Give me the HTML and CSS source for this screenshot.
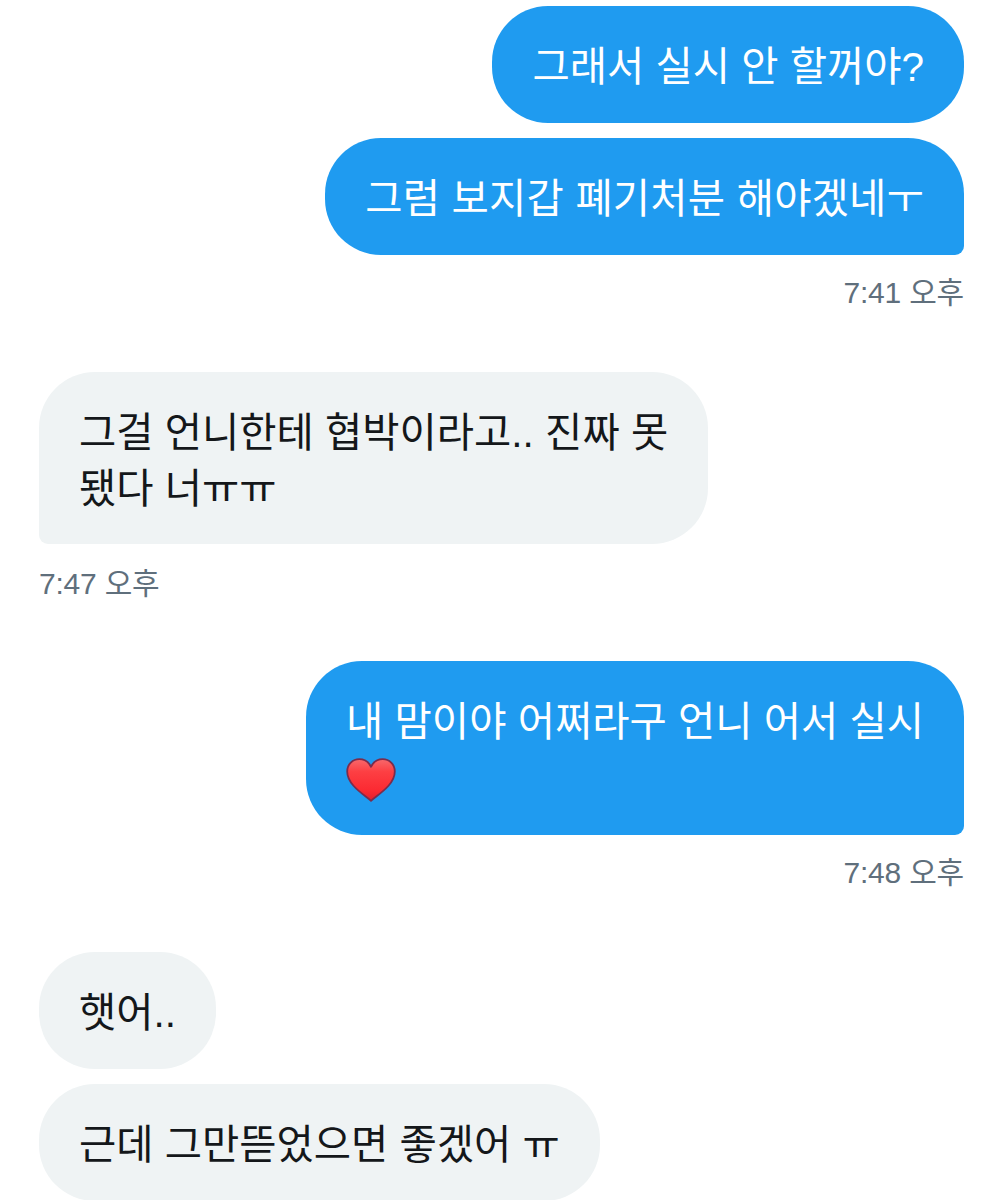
FILE: index.html
```html
<!DOCTYPE html>
<html lang="ko">
<head>
    <meta charset="UTF-8">
    <meta name="viewport" content="width=device-width, initial-scale=1.0">
    <title>Messages</title>
    <link rel="stylesheet" href="styles.css">
</head>
<body>
    <main class="thread">
        <section class="group sent">
            <p class="bubble">그래서 실시 안 할꺼야?</p>
            <p class="bubble last wide">그럼 보지갑 폐기처분 해야겠네ㅜ</p>
            <time class="stamp">7:41 오후</time>
        </section>

        <section class="group received">
            <p class="bubble last">그걸 언니한테 협박이라고.. 진짜 못<br>됐다 너ㅠㅠ</p>
            <time class="stamp">7:47 오후</time>
        </section>

        <section class="group sent">
            <p class="bubble last">내 맘이야 어쩌라구 언니 어서 실시
                <svg class="heart" viewBox="0 0 50 44" role="img" aria-label="heart">
                    <defs>
                        <linearGradient id="heartFill" x1="0" y1="0" x2="0" y2="1">
                            <stop offset="0" stop-color="#f7696c"/>
                            <stop offset="0.3" stop-color="#fd3f43"/>
                            <stop offset="0.75" stop-color="#fb2a32"/>
                            <stop offset="1" stop-color="#e01f2d"/>
                        </linearGradient>
                    </defs>
                    <path d="M25 42.800 C18 36.500 1.200 27 1.200 13.500 C1.200 6 6.800 1.200 13.200 1.200 C18.500 1.200 22.800 4 25 8.800 C27.200 4 31.500 1.200 36.800 1.200 C43.200 1.200 48.800 6 48.800 13.500 C48.800 27 32 36.500 25 42.800 Z" fill="url(#heartFill)" stroke="#7b2c4c" stroke-width="1.800" stroke-linejoin="round"/>
                </svg>
            </p>
            <time class="stamp">7:48 오후</time>
        </section>

        <section class="group received">
            <p class="bubble">햇어..</p>
            <p class="bubble">근데 그만뜯었으면 좋겠어 ㅠ</p>
        </section>
    </main>
</body>
</html>
```

FILE: styles.css
```css
html, body {
    margin: 0;
    padding: 0;
    height: 1200px;
    overflow: hidden;
    background-color: #fff;
}

body {
    font-family: "Liberation Sans", "Noto Sans CJK KR", sans-serif;
}

.thread {
    display: flex;
    flex-direction: column;
    gap: 59px;
    padding: 6px 39px 0 39px;
}

.group {
    display: flex;
    flex-direction: column;
    gap: 15px;
}

.sent {
    align-items: flex-end;
}

.received {
    align-items: flex-start;
}

.bubble {
    margin: 0;
    padding: 33px 40px 28px;
    border-radius: 56px;
    font-size: 40.5px;
    line-height: 56px;
    white-space: nowrap;
}

.wide {
    letter-spacing: 0.2px;
}

.sent .bubble {
    background-color: #1f9bf0;
    color: #fff;
}

.received .bubble {
    background-color: #eff3f4;
    color: #14171a;
}

.sent .last {
    border-bottom-right-radius: 9px;
}

.received .last {
    padding-bottom: 27px;
    border-bottom-left-radius: 9px;
}

.heart {
    display: block;
    width: 50px;
    height: 44px;
    margin: 8px 0 5px;
}

.stamp {
    margin-top: 3px;
    font-size: 30px;
    line-height: 40px;
    letter-spacing: -0.2px;
    color: #5f6f7c;
}

.received .stamp {
    margin-top: 5px;
    margin-bottom: -2px;
}
```
